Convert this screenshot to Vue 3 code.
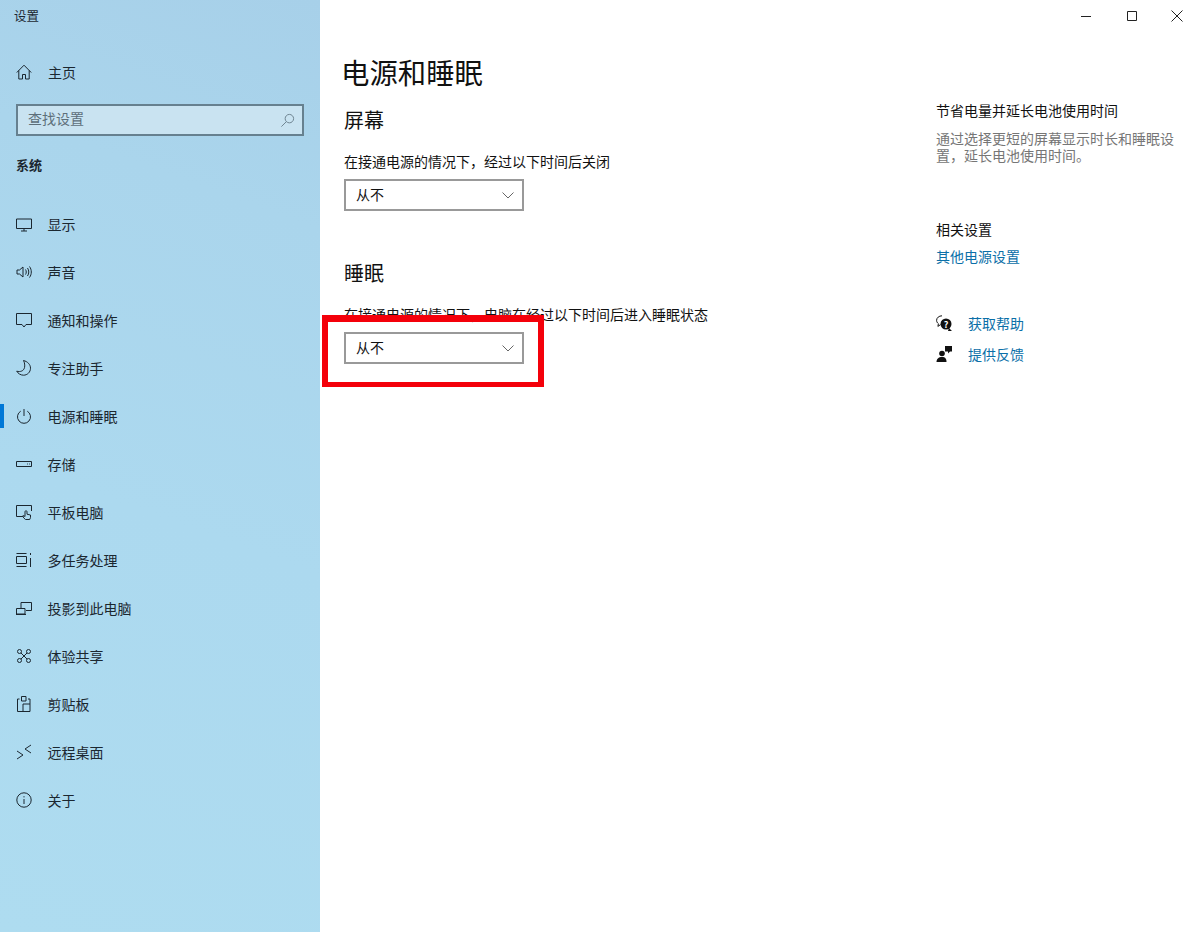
<script setup>
const nav = [
  { label: '显示', paths: ['M.5 3h15v9.500H.5z', 'M8 12.500v2.500', 'M5 15h6'] },
  { label: '声音', paths: ['M1 6h2.500L7 3v10L3.500 10H1z', 'M9.500 5.500c1 1.500 1 3.500 0 5', 'M11.500 4c1.700 2.400 1.700 5.600 0 8', 'M13.500 2.500c2.400 3.300 2.400 7.700 0 11'] },
  { label: '通知和操作', paths: ['M.5 1.500h15v11h-5.500l-2 2.500-2-2.500H.5z'] },
  { label: '专注助手', paths: ['M7.500 .5c4 1 7 4 7 7.700 0 4-3.200 7-7 7-2.800 0-5.500-1.700-6.800-4 3.800 1 7-.3 7.800-3.500.5-2.300.2-5-1-7.200z'] },
  { label: '电源和睡眠', active: true, paths: ['M8 1v7', 'M4.700 3.200a6.500 6.500 0 1 0 6.600 0'] },
  { label: '存储', paths: ['M.5 5.500h15v5H.5z', 'M11 8h.8', 'M13 8h.8'] },
  { label: '平板电脑', paths: ['M7.500 12.500H.5V1.500h15V7', 'M9.500 15.500c-1.200-.8-2.400-2.200-3-3.500l1-.5 1.500 1V7.700c0-1.300 2-1.300 2 0v2.500l3.500.8v2.500l-.8 2z'] },
  { label: '多任务处理', paths: ['M.5 1.500h10', 'M.5 14.500h10', 'M.5 4.500h10v7H.5z', 'M14.500 1v2', 'M14.500 6v9'] },
  { label: '投影到此电脑', paths: ['M5 8V2.500h10.500v8H10', 'M.5 8.500h8.500v5.500H.5z', 'M0 14.500h10'] },
  { label: '体验共享', paths: ['M5 5l6 6', 'M11 5l-6 6', 'M3.500 1.500a2 2 0 1 1 0 4 2 2 0 0 1 0-4z', 'M12.500 1.500a2 2 0 1 1 0 4 2 2 0 0 1 0-4z', 'M3.500 10.500a2 2 0 1 1 0 4 2 2 0 0 1 0-4z', 'M12.500 10.500a2 2 0 1 1 0 4 2 2 0 0 1 0-4z'] },
  { label: '剪贴板', paths: ['M3.500 3H1.500v12.500H14V3h-2', 'M5.500 .5h4.500V5H5.500z', 'M7 15.500V8h7'] },
  { label: '远程桌面', paths: ['M1 7l6 4-6 4', 'M15 1L9 5l6 4'] },
  { label: '关于', paths: ['M8 .8a7.200 7.200 0 1 1 0 14.400A7.200 7.200 0 0 1 8 .8z', 'M8 7v5', 'M8 4.200v1.200'] }
]
</script>

<template>
  <div class="window">
    <aside class="sidebar">
      <div class="app-title">设置</div>
      <div class="nav-row home">
        <svg class="icon" viewBox="0 0 16 16"><path d="M.8 8.500L8 1.200l7.200 7.300M2.800 6.500V15h3.700v-4.500h3V15h3.700V6.500" /></svg>
        <span>主页</span>
      </div>
      <div class="search">
        <span>查找设置</span>
        <svg class="search-icon" viewBox="0 0 16 16"><path d="M10 1.500a4.500 4.500 0 1 1 0 9 4.500 4.500 0 0 1 0-9zM6.800 9.200L1.500 14.500" /></svg>
      </div>
      <div class="group">系统</div>
      <nav class="nav">
        <div v-for="item in nav" :key="item.label" class="nav-row" :class="{ active: item.active }">
          <svg class="icon" viewBox="0 0 16 16"><path v-for="d in item.paths" :key="d" :d="d" /></svg>
          <span>{{ item.label }}</span>
        </div>
      </nav>
    </aside>

    <main class="main">
      <header class="controls">
        <svg viewBox="0 0 12 12"><path d="M1 6.500h10" /></svg>
        <svg viewBox="0 0 12 12"><path d="M1.500 1.500h9v9h-9z" /></svg>
        <svg viewBox="0 0 12 12"><path d="M.5.5l11 11M11.500.5l-11 11" /></svg>
      </header>
      <div class="columns">
        <section class="content">
          <h1>电源和睡眠</h1>
          <h2 class="first">屏幕</h2>
          <p class="label">在接通电源的情况下，经过以下时间后关闭</p>
          <div class="select">
            <span>从不</span>
            <svg viewBox="0 0 12 12"><path d="M.5 3.500L6 9l5.500-5.500" /></svg>
          </div>
          <h2 class="second">睡眠</h2>
          <p class="label">在接通电源的情况下，电脑在经过以下时间后进入睡眠状态</p>
          <div class="select">
            <span>从不</span>
            <svg viewBox="0 0 12 12"><path d="M.5 3.500L6 9l5.500-5.500" /></svg>
          </div>
        </section>
        <section class="aside">
          <h3>节省电量并延长电池使用时间</h3>
          <p class="desc">通过选择更短的屏幕显示时长和睡眠设置，延长电池使用时间。</p>
          <h3 class="related">相关设置</h3>
          <div class="link power-link">其他电源设置</div>
          <div class="help first-help">
            <svg viewBox="0 0 16 16">
              <path class="line" d="M6 .8C3 .8.6 2.800.6 5.300c0 1.400.7 2.600 1.800 3.400l-.5 2.700 2.700-1.800" />
              <path class="solid" d="M10 3.500a5.500 5.500 0 1 1 0 11 5.500 5.500 0 0 1 0-11zM13 13l3 3h-4z" />
              <text x="10" y="12.500" class="q">?</text>
            </svg>
            <span class="link">获取帮助</span>
          </div>
          <div class="help">
            <svg viewBox="0 0 16 16">
              <circle class="solid" cx="6" cy="7.500" r="2.800" />
              <path class="solid" d="M.5 16c0-3 2-5 5.500-5s4.500 2 4.500 5z" />
              <path class="solid" d="M9 0h7v5.500h-2L12 7.500V5.500H9z" />
            </svg>
            <span class="link">提供反馈</span>
          </div>
        </section>
      </div>
      <div class="annotation"></div>
    </main>
  </div>
</template>

<style>
html, body { margin: 0; background: #fff; }
</style>

<style scoped>
.window {
  display: flex;
  width: 1200px;
  height: 932px;
  overflow: hidden;
  font-family: "Noto Sans CJK SC", "Noto Sans", sans-serif;
  font-size: 14px;
  color: #111;
  background: #fff;
}
.sidebar {
  width: 320px;
  flex: none;
  display: flex;
  flex-direction: column;
  background: linear-gradient(200deg, #a7d0e9 0%, #aad5ec 22%, #acd9ef 55%, #aedcf0 100%);
  color: #1b2730;
}
.app-title {
  height: 32px;
  line-height: 32px;
  padding-left: 14px;
  font-size: 12.500px;
}
.nav-row {
  position: relative;
  display: flex;
  align-items: center;
  gap: 16px;
  height: 48px;
  padding-left: 16px;
}
.home { margin-top: 16px; }
.nav-row.active::before {
  content: "";
  position: absolute;
  left: 0;
  top: 12px;
  width: 4px;
  height: 24px;
  background: #0078d7;
}
.icon {
  width: 16px;
  height: 16px;
  flex: none;
  fill: none;
  stroke: #1b2730;
  stroke-width: 1;
}
.search {
  display: flex;
  align-items: center;
  justify-content: space-between;
  box-sizing: border-box;
  width: 288px;
  height: 32px;
  margin: 8px 0 0 16px;
  padding: 0 7px 0 10px;
  border: 2px solid #66808f;
  background: #c9e3f1;
  color: #5d6f7a;
}
.search span { margin-top: -4px; }
.search-icon {
  width: 15px;
  height: 15px;
  fill: none;
  stroke: #6a7f8c;
  stroke-width: 1;
}
.group {
  height: 24px;
  line-height: 24px;
  margin: 17px 0 0 16px;
  font-weight: 700;
  font-size: 13px;
}
.nav { margin-top: 23px; }
.nav .nav-row { gap: 15.500px; }
.main {
  position: relative;
  flex: 1;
  min-width: 0;
}
.controls {
  display: flex;
  justify-content: flex-end;
  gap: 33.500px;
  height: 32px;
  padding: 10px 17px 0 0;
  box-sizing: border-box;
}
.controls svg {
  width: 12px;
  height: 12px;
  fill: none;
  stroke: #222;
  stroke-width: 1;
}
.columns {
  display: flex;
  justify-content: space-between;
  padding: 0 20px 0 24px;
}
h1, h2, h3, p { margin: 0; font-weight: 400; }
h1 {
  margin: 20px 0 0 -3px;
  font-size: 28.400px;
  line-height: 40px;
}
h2 {
  font-size: 20px;
  line-height: 28px;
}
.first { margin-top: 14px; }
.second { margin-top: 48px; }
.label {
  margin-top: 17px;
  line-height: 20px;
  height: 20px;
}
.select {
  display: flex;
  align-items: center;
  justify-content: space-between;
  box-sizing: border-box;
  width: 180px;
  height: 32px;
  margin-top: 8px;
  padding: 0 8px 0 10px;
  border: 2px solid #999;
}
.select span { margin-top: -2px; }
.select svg {
  width: 12px;
  height: 12px;
  fill: none;
  stroke: #666;
  stroke-width: 1;
}
.aside {
  width: 244px;
  padding-top: 68px;
}
h3 {
  font-size: 14px;
  line-height: 20px;
}
.desc {
  margin-top: 10px;
  line-height: 17px;
  color: #767676;
}
.related { margin-top: 55px; }
.link { color: #0b6fa8; }
.power-link {
  margin-top: 7px;
  line-height: 20px;
}
.help {
  display: flex;
  align-items: center;
  gap: 16px;
  height: 20px;
  margin-top: 11px;
}
.first-help { margin-top: 47px; }
.help svg {
  width: 16px;
  height: 16px;
  flex: none;
  overflow: visible;
}
.solid { fill: #111; }
.line { fill: none; stroke: #111; stroke-width: 1; }
.q {
  fill: #fff;
  font-size: 9px;
  font-weight: 700;
  text-anchor: middle;
}
.annotation {
  position: absolute;
  left: 2px;
  top: 315px;
  width: 222px;
  height: 72px;
  box-sizing: border-box;
  border-style: solid;
  border-color: #f4000a;
  border-width: 7px 6px 5px;
}
</style>
